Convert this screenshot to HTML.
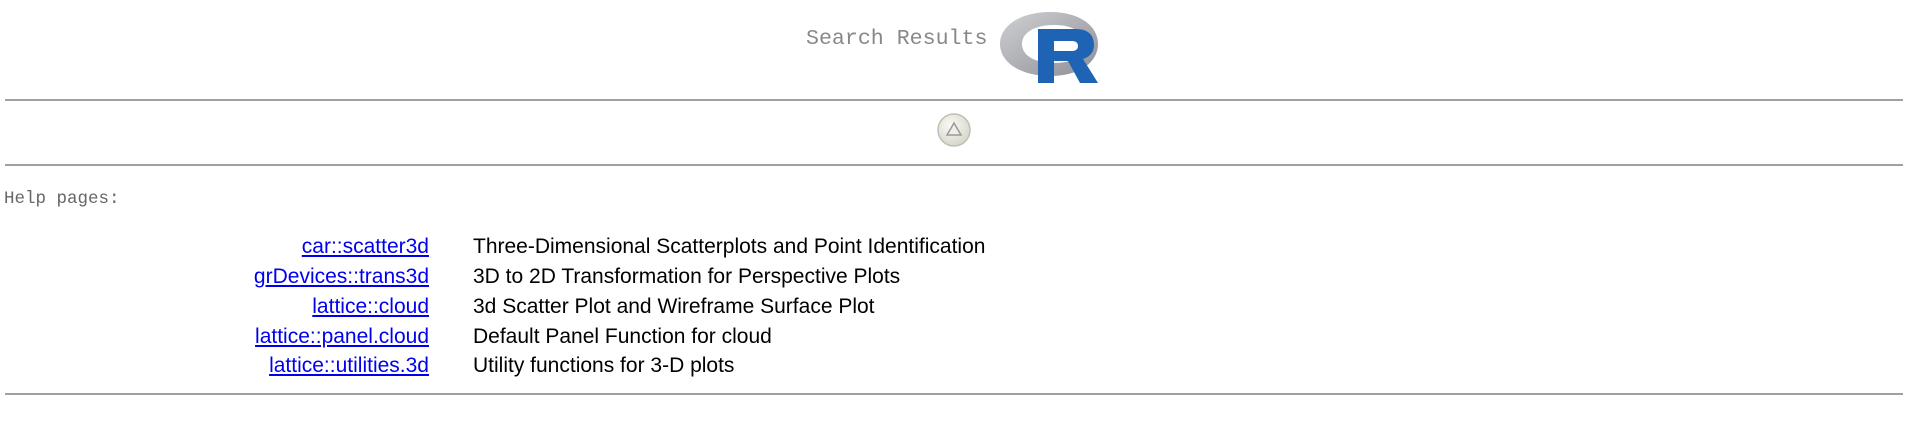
<!DOCTYPE html>
<html><head><style>
body{margin:0;width:1910px;height:421px;background:#fff;position:relative;overflow:hidden;font-family:"Liberation Sans",sans-serif}
.a{position:absolute}
.hr{position:absolute;left:5px;width:1898px;height:0;border-top:2px solid #a0a0a0}
.t{font-family:"Liberation Mono",monospace;color:#888;font-size:21.6px}
.row{position:absolute;left:0;width:1910px;font-size:21px;height:30px;line-height:30px}
.row a{position:absolute;right:1481px;color:#0000ee;text-decoration:underline;white-space:nowrap}
.row span{position:absolute;left:473px;color:#000;white-space:nowrap}
</style></head><body>
<div class="a t" style="left:806px;top:27px">Search Results</div>
<svg class="a" style="left:998px;top:5px" width="106" height="80" viewBox="0 0 106 80">
<defs><linearGradient id="g" x1="0" y1="0" x2="1" y2="1"><stop offset="0" stop-color="#cfd0d4"/><stop offset="1" stop-color="#8e8f95"/></linearGradient></defs>
<path fill-rule="evenodd" fill="url(#g)" d="M52 7C22 7 2 21 2 39s20 32 50 32 48-14 48-32S82 7 52 7zM56 20c-20 0-32 8-32 19s12 19 32 19 30-8 30-19-10-19-30-19z"/>
<path fill="#1f63b4" d="M40 24h38c14 0 18 8 18 16 0 8-5 12-11 14l15 24H82L70 56H56v22H40zM56 36v10h18c4 0 6-2 6-5s-2-5-6-5z"/>
</svg>
<div class="hr" style="top:99px"></div>
<svg class="a" style="left:936px;top:112px" width="36" height="36" viewBox="0 0 36 36">
<defs><radialGradient id="c" cx="0.4" cy="0.35" r="0.7"><stop offset="0" stop-color="#fbfbf5"/><stop offset="1" stop-color="#d4d4c8"/></radialGradient></defs>
<circle cx="18" cy="18" r="16" fill="url(#c)" stroke="#c0c0b8" stroke-width="1.5"/>
<path d="M11 23L18 11L25 23Z" fill="#eeeeea" stroke="#999" stroke-width="1.5"/>
</svg>
<div class="hr" style="top:164px"></div>
<div class="a" style="left:4px;top:189px;font-family:'Liberation Mono',monospace;font-size:17.5px;color:#666">Help pages:</div>
<div class="row" style="top:232px"><a>car::scatter3d</a><span>Three-Dimensional Scatterplots and Point Identification</span></div>
<div class="row" style="top:262px"><a>grDevices::trans3d</a><span>3D to 2D Transformation for Perspective Plots</span></div>
<div class="row" style="top:292px"><a>lattice::cloud</a><span>3d Scatter Plot and Wireframe Surface Plot</span></div>
<div class="row" style="top:322px"><a>lattice::panel.cloud</a><span>Default Panel Function for cloud</span></div>
<div class="row" style="top:351px"><a>lattice::utilities.3d</a><span>Utility functions for 3-D plots</span></div>
<div class="hr" style="top:393px"></div>
</body></html>
